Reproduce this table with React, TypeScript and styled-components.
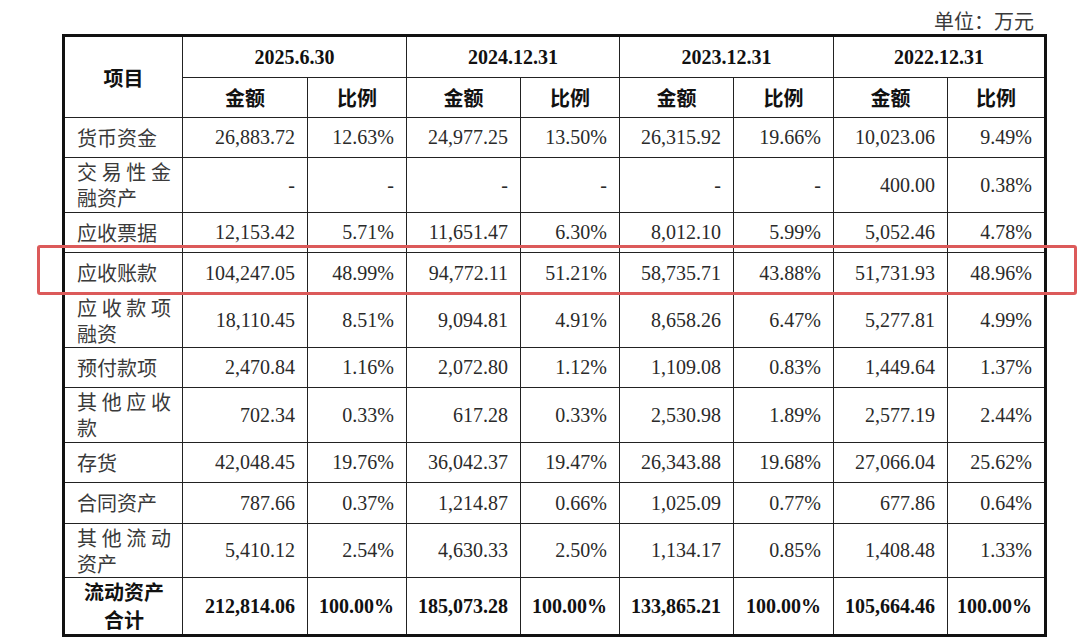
import React from "react";
import styled, { createGlobalStyle } from "styled-components";

const GlobalStyle = createGlobalStyle`
  html, body { margin: 0; padding: 0; background: #ffffff; }
  body { font-family: "Liberation Serif", "Noto Sans CJK SC", serif; }
`;

const Page = styled.div`
  position: relative;
  width: 1080px;
  height: 643px;
  box-sizing: border-box;
  padding-left: 62px;
  display: flex;
  flex-direction: column;
`;

const UnitLine = styled.div`
  width: 982px;
  height: 34px;
  box-sizing: border-box;
  padding-right: 10px;
  padding-top: 7px;
  display: flex;
  align-items: center;
  justify-content: flex-end;
  font-family: "Noto Sans CJK SC", sans-serif;
  font-size: 20px;
  color: #3a3a3a;
`;

const Table = styled.table`
  width: 982px;
  table-layout: fixed;
  border-collapse: collapse;
  border: 3px solid #111;
`;

const HeadCell = styled.th`
  border: 1px solid #222;
  padding: 0;
  font-family: "Liberation Serif", "Noto Sans CJK SC", serif;
  font-weight: 700;
  font-size: 20px;
  color: #111;
  text-align: center;
  vertical-align: middle;
`;

const LabelCell = styled.td<{ $bold?: boolean }>`
  border: 1px solid #222;
  padding: 0 11px 0 12px;
  font-family: "Noto Sans CJK SC", sans-serif;
  font-size: 20px;
  line-height: ${(p) => (p.$bold ? 28 : 26)}px;
  font-weight: ${(p) => (p.$bold ? 700 : 400)};
  color: ${(p) => (p.$bold ? "#111" : "#3a3a3a")};
  text-align: ${(p) => (p.$bold ? "center" : "justify")};
  vertical-align: middle;
  word-break: break-all;
`;

const NumCell = styled.td<{ $bold?: boolean }>`
  border: 1px solid #222;
  padding: 0 12px 0 4px;
  font-family: "Liberation Serif", serif;
  font-size: 20px;
  font-weight: ${(p) => (p.$bold ? 700 : 400)};
  color: ${(p) => (p.$bold ? "#111" : "#2a2a2a")};
  text-align: right;
  vertical-align: middle;
  white-space: nowrap;
`;

const Row = styled.tr<{ $h: number }>`
  height: ${(p) => p.$h}px;
`;

const Highlight = styled.div`
  position: absolute;
  left: 37px;
  top: 245px;
  width: 1040px;
  height: 50px;
  box-sizing: border-box;
  border: 3px solid #dc5a5a;
  border-radius: 3px;
  pointer-events: none;
`;

type DataRow = { label: string; values: string[]; h: number; bold?: boolean };

const rows: DataRow[] = [
  { label: "货币资金", h: 40, values: ["26,883.72", "12.63%", "24,977.25", "13.50%", "26,315.92", "19.66%", "10,023.06", "9.49%"] },
  { label: "交易性金融资产", h: 55, values: ["-", "-", "-", "-", "-", "-", "400.00", "0.38%"] },
  { label: "应收票据", h: 40, values: ["12,153.42", "5.71%", "11,651.47", "6.30%", "8,012.10", "5.99%", "5,052.46", "4.78%"] },
  { label: "应收账款", h: 41, values: ["104,247.05", "48.99%", "94,772.11", "51.21%", "58,735.71", "43.88%", "51,731.93", "48.96%"] },
  { label: "应收款项融资", h: 54, values: ["18,110.45", "8.51%", "9,094.81", "4.91%", "8,658.26", "6.47%", "5,277.81", "4.99%"] },
  { label: "预付款项", h: 40, values: ["2,470.84", "1.16%", "2,072.80", "1.12%", "1,109.08", "0.83%", "1,449.64", "1.37%"] },
  { label: "其他应收款", h: 55, values: ["702.34", "0.33%", "617.28", "0.33%", "2,530.98", "1.89%", "2,577.19", "2.44%"] },
  { label: "存货", h: 40, values: ["42,048.45", "19.76%", "36,042.37", "19.47%", "26,343.88", "19.68%", "27,066.04", "25.62%"] },
  { label: "合同资产", h: 41, values: ["787.66", "0.37%", "1,214.87", "0.66%", "1,025.09", "0.77%", "677.86", "0.64%"] },
  { label: "其他流动资产", h: 54, values: ["5,410.12", "2.54%", "4,630.33", "2.50%", "1,134.17", "0.85%", "1,408.48", "1.33%"] },
  { label: "流动资产合计", h: 56, bold: true, values: ["212,814.06", "100.00%", "185,073.28", "100.00%", "133,865.21", "100.00%", "105,664.46", "100.00%"] },
];

const colWidths = [119, 125, 99, 114, 99, 114, 100, 114, 98];
const dates = ["2025.6.30", "2024.12.31", "2023.12.31", "2022.12.31"];

export default function App() {
  return (
    <>
      <GlobalStyle />
      <Page>
        <UnitLine>单位：万元</UnitLine>
        <Table>
          <colgroup>
            {colWidths.map((w, i) => (
              <col key={i} style={{ width: w }} />
            ))}
          </colgroup>
          <thead>
            <Row $h={42}>
              <HeadCell rowSpan={2}>项目</HeadCell>
              {dates.map((d) => (
                <HeadCell key={d} colSpan={2}>
                  {d}
                </HeadCell>
              ))}
            </Row>
            <Row $h={40}>
              {dates.map((d) => (
                <React.Fragment key={d}>
                  <HeadCell>金额</HeadCell>
                  <HeadCell>比例</HeadCell>
                </React.Fragment>
              ))}
            </Row>
          </thead>
          <tbody>
            {rows.map((r) => (
              <Row key={r.label} $h={r.h}>
                <LabelCell $bold={r.bold}>
                  {r.bold ? (
                    <>
                      流动资产
                      <br />
                      合计
                    </>
                  ) : (
                    r.label
                  )}
                </LabelCell>
                {r.values.map((v, i) => (
                  <NumCell key={i} $bold={r.bold}>
                    {v}
                  </NumCell>
                ))}
              </Row>
            ))}
          </tbody>
        </Table>
        <Highlight />
      </Page>
    </>
  );
}
